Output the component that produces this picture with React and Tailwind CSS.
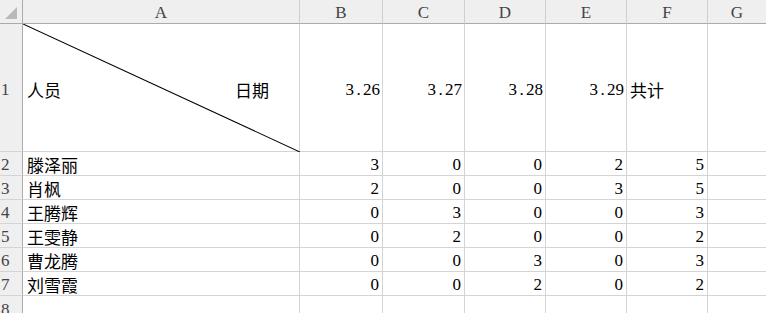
import React from "react";

const LINE = "border-[#d4d4d4]";
const serif = { fontFamily: '"Liberation Serif", "Noto Sans CJK SC", serif' };
const cjk = { fontFamily: '"Noto Sans CJK SC", "Liberation Serif", sans-serif' };

const people = [
  ["滕泽丽", 3, 0, 0, 2, 5],
  ["肖枫", 2, 0, 0, 3, 5],
  ["王腾辉", 0, 3, 0, 0, 3],
  ["王雯静", 0, 2, 0, 0, 2],
  ["曹龙腾", 0, 0, 3, 0, 3],
  ["刘雪霞", 0, 0, 2, 0, 2],
];

function ColHead({ children, last }) {
  return (
    <div
      className={`bg-[#efefef] border-b border-b-[#ababab] ${last ? "" : "border-r border-r-[#cfcfcf]"} flex items-center justify-center text-[17px] text-[#444] leading-none pt-[1px]`}
      style={serif}
    >
      {children}
    </div>
  );
}

function RowHead({ children }) {
  return (
    <div
      className="bg-[#efefef] border-r border-r-[#ababab] border-b border-b-[#d4d4d4] flex items-end text-[17px] text-[#444] leading-[20px] pl-[1px] overflow-hidden"
      style={serif}
    >
      {children}
    </div>
  );
}

function Date({ a, b }) {
  return (
    <div className={`border-r border-b ${LINE} flex items-center justify-end pr-[2px] pt-[5px] text-[17px] text-black`} style={serif}>
      <span>{a}</span>
      <span className="inline-block w-[9px] text-center">.</span>
      <span>{b}</span>
    </div>
  );
}

export default function App() {
  return (
    <div className="w-[766px] h-[313px] overflow-hidden bg-white">
      <div className="grid grid-cols-[23px_277px_83px_82px_81px_81px_81px_1fr] grid-rows-[24px_128px_24px_24px_24px_24px_24px_24px_1fr] h-[313px]">
        {/* header row */}
        <div className="bg-[#efefef] border-r border-r-[#ababab] border-b border-b-[#ababab] relative">
          <svg className="absolute left-[5px] top-[7px]" width="12" height="12" viewBox="0 0 12 12">
            <polygon points="12,0 12,12 0,12" fill="#b9b9b9" />
          </svg>
        </div>
        <ColHead>A</ColHead>
        <ColHead>B</ColHead>
        <ColHead>C</ColHead>
        <ColHead>D</ColHead>
        <ColHead>E</ColHead>
        <ColHead>F</ColHead>
        <ColHead last>G</ColHead>

        {/* row 1 */}
        <div className="bg-[#efefef] border-r border-r-[#ababab] border-b border-b-[#d4d4d4] flex items-center pt-[5px] pl-[1px] text-[17px] text-[#444]" style={serif}>1</div>
        <div className={`relative border-r border-b ${LINE}`}>
          <svg className="absolute left-0 top-0" width="277" height="128" viewBox="0 0 277 128">
            <line x1="0" y1="0" x2="277" y2="128" stroke="#000" strokeWidth="1.1" />
          </svg>
          <div className="absolute inset-0 flex items-center justify-between pl-[4px] pr-[30px] pt-[4px] text-[17px] text-black" style={cjk}>
            <span>人员</span>
            <span>日期</span>
          </div>
        </div>
        <Date a="3" b="26" />
        <Date a="3" b="27" />
        <Date a="3" b="28" />
        <Date a="3" b="29" />
        <div className={`border-r border-b ${LINE} flex items-center pl-[3px] pt-[4px] text-[17px] text-black`} style={cjk}>共计</div>
        <div className={`border-b ${LINE}`} />

        {people.map((p, i) => (
          <React.Fragment key={i}>
            <RowHead>{i + 2}</RowHead>
            <div className={`border-r border-b ${LINE} flex items-end pl-[4px] text-[17px] leading-[21px] text-black`} style={cjk}>
              {p[0]}
            </div>
            {p.slice(1).map((v, j) => (
              <div key={j} className={`border-r border-b ${LINE} flex items-end justify-end pr-[3px] text-[17px] leading-[20px] text-black`} style={serif}>
                {v}
              </div>
            ))}
            <div className={`border-b ${LINE}`} />
          </React.Fragment>
        ))}

        {/* row 8 */}
        <div className="bg-[#efefef] border-r border-r-[#ababab] flex items-start pt-[4px] pl-[1px] text-[17px] leading-[20px] text-[#444] overflow-hidden" style={serif}>8</div>
        <div className={`border-r ${LINE}`} />
        <div className={`border-r ${LINE}`} />
        <div className={`border-r ${LINE}`} />
        <div className={`border-r ${LINE}`} />
        <div className={`border-r ${LINE}`} />
        <div className={`border-r ${LINE}`} />
        <div />
      </div>
    </div>
  );
}
